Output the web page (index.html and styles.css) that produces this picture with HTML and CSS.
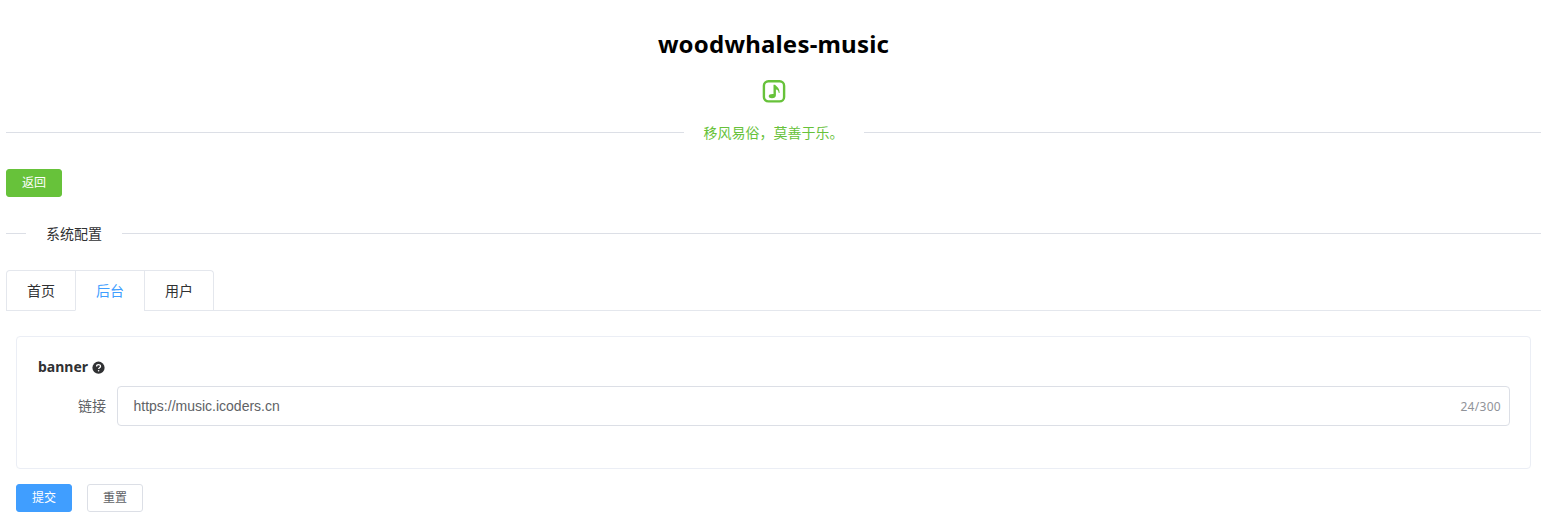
FILE: index.html
```html
<!DOCTYPE html>
<html lang="zh-CN">
<head>
<meta charset="utf-8">
<title>woodwhales-music</title>
<link rel="stylesheet" href="styles.css">
</head>
<body>
<header class="banner">
  <h1 class="title">woodwhales-music</h1>
  <svg class="logo" width="24" height="24" viewBox="0 0 24 24">
    <rect x="1.900" y="2.200" width="20.200" height="20.200" rx="4.500" fill="none" stroke="#67c23a" stroke-width="2.400"/>
    <path d="M11.500 5.800h1.600c.5 1.500 4.700 2.300 4.500 8.300h-.8c-.2-2.200-1.200-3.400-2.900-3.600v5.700c0 1.900-1.600 3-3.900 3-2 0-3.300-.7-3.300-2 0-1.600 1.800-2.400 4.800-2.200z" fill="#67c23a"/>
  </svg>
</header>
<div class="divider motto"><span class="divider-text">移风易俗，莫善于乐。</span></div>
<button class="btn success">返回</button>
<div class="divider section"><span class="divider-text">系统配置</span></div>
<nav class="tabs">
  <div class="tab-list">
    <a class="tab">首页</a><a class="tab active">后台</a><a class="tab">用户</a>
  </div>
</nav>
<main class="content">
  <section class="card">
    <h2 class="card-title"><span class="card-name">banner</span>
      <svg class="help" width="13" height="13" viewBox="0 0 13 13">
        <circle cx="6.5" cy="6.7" r="6.1" fill="#303133"/>
        <path d="M4.600 5.400c0-2.300 3.900-2.300 3.900 0 0 1.300-1.900 1.300-1.900 2.600" fill="none" stroke="#fff" stroke-width="1.300"/>
        <circle cx="6.600" cy="9.700" r=".8" fill="#fff"/>
      </svg>
    </h2>
    <div class="field">
      <label class="label">链接</label>
      <div class="input"><span class="value">https://music.icoders.cn</span><span class="count">24/300</span></div>
    </div>
  </section>
  <div class="actions">
    <button class="btn primary">提交</button>
    <button class="btn plain">重置</button>
  </div>
</main>
</body>
</html>
```
FILE: styles.css
```css
* { box-sizing: border-box; }
body {
  margin: 0;
  padding: 0 3px 0 6px;
  background: #fff;
  color: #303133;
  font: 14px/20px "Noto Sans", "Noto Sans CJK SC", sans-serif;
}
.banner { display: flex; flex-direction: column; align-items: center; height: 132px; padding-top: 28px; }
.title { margin: 0; font-size: 24px; line-height: 32px; font-weight: 700; letter-spacing: 0.2px; color: #000; white-space: nowrap; }
.logo { display: block; margin: 19px 0 0; }
.divider { display: flex; align-items: center; height: 1px; }
.divider::before, .divider::after { content: ""; height: 1px; flex: 1; background: #dcdfe6; }
.divider-text { padding: 0 20px 2px; line-height: 20px; white-space: nowrap; font-family: "Noto Sans CJK SC", sans-serif; }
.motto { color: #67c23a; margin-bottom: 36px; }
.section { margin: 36px 0; }
.section::before { flex: 0 0 20px; }
.btn {
  display: block;
  width: 56px;
  height: 28px;
  padding: 0 0 2px;
  border: 1px solid;
  border-radius: 3px;
  font: 12px/12px "Noto Sans CJK SC", sans-serif;
  text-align: center;
}
.success { background: #67c23a; border-color: #67c23a; color: #fff; }
.primary { background: #409eff; border-color: #409eff; color: #fff; }
.plain { background: #fff; border-color: #dcdfe6; color: #606266; }
.tabs { display: flex; height: 41px; border-bottom: 1px solid #e4e7ed; }
.tab-list { display: flex; height: 41px; border: 1px solid #e4e7ed; border-bottom: 0; border-radius: 4px 4px 0 0; }
.tab { height: 40px; padding: 0 20px; line-height: 38px; border-left: 1px solid #e4e7ed; border-bottom: 1px solid #e4e7ed; font-family: "Noto Sans CJK SC", sans-serif; }
.tab:first-child { border-left: 0; }
.active { color: #409eff; border-bottom-color: #fff; }
.content { padding: 25px 10px 0; }
.card { height: 133px; padding: 20px; border: 1px solid #ebeef5; border-radius: 4px; }
.card-title { display: flex; align-items: center; gap: 4px; height: 20px; margin: 0 0 9px; font-size: 14px; font-weight: 700; }
.card-name { padding-left: 1px; }
.help { margin-top: 1px; }
.field { display: flex; height: 40px; }
.label { width: 80px; padding-right: 11px; text-align: right; line-height: 38px; color: #606266; font-family: "Noto Sans CJK SC", sans-serif; }
.input { flex: 1; display: flex; align-items: center; justify-content: space-between; padding: 0 8px 0 15.5px; border: 1px solid #dcdfe6; border-radius: 4px; }
.value { font: 14px/20px "Liberation Sans", Arial, sans-serif; color: #606266; }
.count { padding-top: 1px; font-size: 12px; letter-spacing: 0.3px; color: #909399; }
.actions { display: flex; gap: 15px; margin-top: 15px; }
```
